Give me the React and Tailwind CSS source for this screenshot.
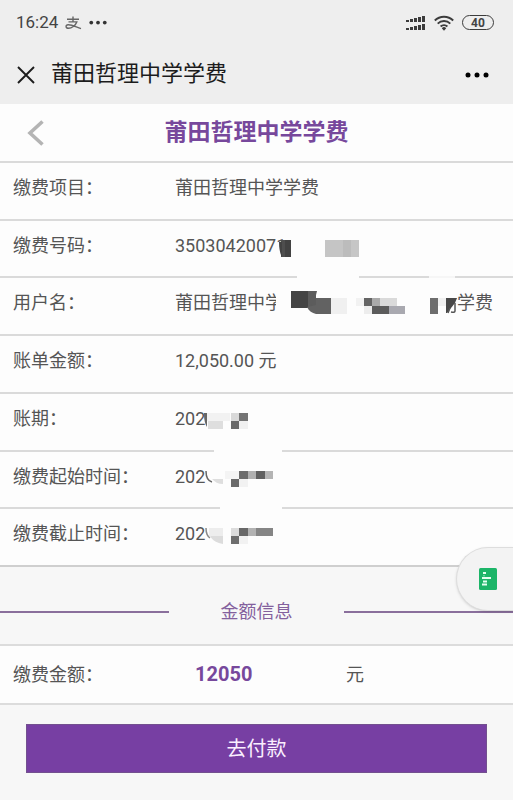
const bill = [
  { label: "缴费项目：", value: "莆田哲理中学学费" },
  { label: "缴费号码：", value: "35030420071", mask: "number" },
  { label: "用户名：", value: "莆田哲理中学", mask: "name", tail: "学费" },
  { label: "账单金额：", value: "12,050.00 元" },
  { label: "账期：", value: "202", mask: "period" },
  { label: "缴费起始时间：", value: "202", mask: "start" },
  { label: "缴费截止时间：", value: "202", mask: "end" },
];

// [x, y, width, height, colour], measured from the value's left edge and the row's top
const masks = {
  number: [
    [110, 16, 75, 22, "#fdfdfd"],
    [106, 19, 5, 17, "#4e4e4e"],
    [110, 19, 6, 17, "#424242"],
    [150, 19, 18, 17, "#c5c5c5"],
    [168, 19, 8, 17, "#bcbcbc"],
    [176, 19, 8, 17, "#c6c6c6"],
    [122, 55, 62, 3, "#fdfdfd"],
    [254, 55, 26, 2, "#f6f6f6"],
  ],
  name: [
    [101, 7, 180, 36, "#fdfdfd"],
    [116, 13, 17, 17, "#444444"],
    [133, 13, 8, 17, "#5c5c5c"],
    [141, 20, 15, 16, "#626262"],
    [156, 20, 16, 16, "#f0f0f0"],
    [181, 20, 8, 8, "#f2f2f2"],
    [189, 20, 8, 8, "#646464"],
    [197, 20, 8, 8, "#aaaaaa"],
    [205, 20, 17, 8, "#dadada"],
    [189, 28, 8, 8, "#ededed"],
    [197, 28, 17, 8, "#5c5c5c"],
    [214, 28, 16, 8, "#a9a9b0"],
    [255, 20, 8, 16, "#6e6e6e"],
    [263, 20, 8, 8, "#f0f0f0"],
  ],
  period: [
    [31, 14, 60, 26, "#fdfdfd"],
    [32, 19, 23, 8, "#f2f2f2"],
    [33, 27, 15, 8, "#dedede"],
    [56, 19, 8, 8, "#d9d9d9"],
    [64, 19, 9, 8, "#747474"],
    [56, 27, 8, 8, "#6a6a6a"],
    [64, 27, 9, 8, "#f0f0f0"],
    [39, 55, 68, 3, "#fdfdfd"],
  ],
  start: [
    [31, 14, 74, 26, "#fdfdfd"],
    [50, 19, 14, 8, "#f4f4f4"],
    [64, 19, 9, 8, "#6c6c6c"],
    [73, 19, 8, 8, "#b0b0b0"],
    [81, 19, 9, 8, "#606060"],
    [90, 19, 8, 8, "#b4b4b4"],
    [56, 27, 8, 8, "#6a6a6a"],
    [64, 27, 9, 8, "#f2f2f2"],
    [45, 55, 62, 3, "#fdfdfd"],
  ],
  end: [
    [31, 14, 74, 26, "#fdfdfd"],
    [34, 19, 14, 8, "#ededed"],
    [56, 19, 8, 8, "#dcdcdc"],
    [64, 19, 9, 8, "#686868"],
    [73, 19, 8, 8, "#b2b2b2"],
    [81, 19, 17, 8, "#858585"],
    [56, 27, 8, 8, "#6e6e6e"],
    [64, 27, 9, 8, "#f2f2f2"],
  ],
};

const maskShapes = {
  number: <path d="M104 21h3v15c-2-3-3-9-3-15z" fill="#424242" />,
  name: (
    <>
      <path d="M141 13h1l-2 8h1v9l-8-5z" fill="#5c5c5c" />
      <path d="M132 29l9-2v9c-4-1-7-3-9-7z" fill="#626262" />
      <path d="M271 20h11l-2 5-8 10h-1z" fill="#484848" />
      <path d="M275 30l-2 5M280 25v8q0 2-4 1" fill="none" stroke="#555" strokeWidth="1.5" />
    </>
  ),
  period: <path d="M29 19h3v14c-2-3-3-7-3-14z" fill="#666" />,
  start: (
    <>
      <path d="M31 19c0 6 2 10 6 11" fill="none" stroke="#666" strokeWidth="1.5" />
      <path d="M37 27h11v5c-5 0-8-2-11-5z" fill="#dedede" />
    </>
  ),
  end: (
    <>
      <path d="M31 19c0 5 1 8 4 10" fill="none" stroke="#888" strokeWidth="1.5" />
      <path d="M35 27h13v8c-6-1-10-3-13-8z" fill="#dcdcdc" />
    </>
  ),
};

const Mask = ({ name }) => (
  <svg
    className="absolute left-0 top-0 z-10 overflow-visible pointer-events-none"
    width="320"
    height="58"
    shapeRendering="crispEdges"
    aria-hidden="true"
  >
    {masks[name].map(([x, y, w, h, fill], i) => (
      <rect key={i} x={x} y={y} width={w} height={h} fill={fill} />
    ))}
    <g shapeRendering="auto">{maskShapes[name]}</g>
  </svg>
);

const AlipayIcon = () => (
  <svg width="17" height="14" viewBox="0 0 17 14" fill="none" stroke="#666" strokeWidth="1.4">
    <path d="M2 3.2h12M8 .5v5.2M3.5 5.9h8.3C10.500 9.500 6.500 12.300 3.600 12.300c-3.200 0-3.400-3.400-.4-3.600C7 8.500 11 11 16 12.600" />
  </svg>
);

const SignalIcon = () => (
  <svg width="20" height="16" viewBox="0 0 20 16" fill="#3c3c3c">
    {[0, 8].map((y) => (
      <g key={y}>
        <rect x="0" y={y + 5} width="3" height="2" />
        <rect x="4" y={y + 4} width="3" height="3" />
        <rect x="8" y={y + 3} width="3" height="4" />
        <rect x="12" y={y + 2} width="3" height="5" />
        <rect x="16" y={y + 1} width="3" height="6" />
      </g>
    ))}
  </svg>
);

const WifiIcon = () => (
  <svg width="20" height="16" viewBox="0 0 20 16" fill="none" stroke="#3c3c3c" strokeWidth="1.9">
    <path d="M.8 5.500a13 13 0 0 1 18.400 0M3.700 8.600a9 9 0 0 1 12.600 0M6.600 11.500a5 5 0 0 1 6.800 0" />
    <path d="M7.800 13.200a3 3 0 0 1 4.400 0L10 15.800z" fill="#3c3c3c" stroke="none" />
  </svg>
);

const CloseIcon = () => (
  <svg width="20" height="20" viewBox="0 0 20 20" fill="none" stroke="currentColor" strokeWidth="1.9">
    <path d="M2 2l16 16M18 2L2 18" />
  </svg>
);

const BackIcon = () => (
  <svg width="18" height="26" viewBox="0 0 18 26" fill="none" stroke="currentColor" strokeWidth="3.6">
    <path d="M15.500 1.500L3 13l12.500 11.500" />
  </svg>
);

const Dots = ({ className }) => (
  <svg className={className} viewBox="0 0 24 6" fill="currentColor">
    <circle cx="3" cy="3" r="2.500" />
    <circle cx="12" cy="3" r="2.500" />
    <circle cx="21" cy="3" r="2.500" />
  </svg>
);

const StatusBar = () => (
  <div className="flex items-center justify-between h-[45px] pl-4 pr-[19px]">
    <div className="flex items-center gap-[7px] text-[17px] text-[#444]">
      <span>16:24</span>
      <AlipayIcon />
      <Dots className="w-[18px] h-[5px] text-[#333]" />
    </div>
    <div className="flex items-center gap-2">
      <SignalIcon />
      <WifiIcon />
      <span className="flex items-center justify-center w-8 h-[15px] rounded-full border border-[#3c3c3c] text-xs leading-none font-bold text-[#444]">
        40
      </span>
    </div>
  </div>
);

const BillRow = ({ label, value, mask, tail }) => (
  <div className="flex border-b-2 last:border-[#cfcfcf] border-[#dadada] bg-[#fdfdfd] pl-[13px] leading-[49px]">
    <dt className="w-[162px] shrink-0">{label}</dt>
    <dd className="relative flex flex-1 justify-between pr-5">
      <span>{value}</span>
      {mask && <Mask name={mask} />}
      {tail && <span>{tail}</span>}
    </dd>
  </div>
);

const App = () => {
  return (
    <div
      lang="zh-CN"
      className="min-h-screen bg-[#f7f7f7] font-['Roboto','Noto_Sans_CJK_SC',sans-serif] text-lg text-[#555]"
    >
      <header className="bg-[#eeeeee] text-[#1c1c1c]">
        <StatusBar />
        <div className="flex items-center h-[59px] pl-4 pr-6">
          <button aria-label="关闭">
            <CloseIcon />
          </button>
          <h1 className="flex-1 pl-[15px] text-[22px]">莆田哲理中学学费</h1>
          <button aria-label="更多">
            <Dots className="w-6 h-[6px] text-black" />
          </button>
        </div>
      </header>

      <main>
        <div className="relative flex items-center justify-center h-[59px] border-b-2 border-[#dadada] bg-[#fdfdfd]">
          <button aria-label="返回" className="absolute left-[27px] text-[#b4b4b4]">
            <BackIcon />
          </button>
          <h2 className="text-[23px] font-bold text-[#77489c]">莆田哲理中学学费</h2>
        </div>

        <dl className="grid grid-rows-7 h-[404px]">
          {bill.map((row) => (
            <BillRow key={row.label} {...row} />
          ))}
        </dl>

        <section>
          <div className="relative flex items-center justify-between h-[79px] border-b-2 border-[#dcdcdc]">
            <span className="w-[33%] h-[2px] mt-3 bg-[#8a6f9c]" />
            <h3 className="mt-3 text-[#83609d]">金额信息</h3>
            <span className="w-[33%] h-[2px] mt-3 bg-[#8a6f9c]" />

            {/* Floating shortcut, sits over the list and the divider */}
            <button
              aria-label="账单"
              className="absolute right-0 -top-5 z-20 flex items-center w-[57px] h-16 pl-[22px] rounded-l-full border border-r-0 border-[#dddddd] bg-[#f3f3f3] shadow-sm"
            >
              <svg width="18" height="22" viewBox="0 0 18 22">
                <rect width="18" height="22" rx="1.500" fill="#1cb568" />
                <path d="M4 5h3M3 10h9M4 13.500h4M3 16.500h5" stroke="#e4fff0" strokeWidth="1.800" />
                <path d="M4 7.800h2" stroke="#7fdcaa" />
              </svg>
            </button>
          </div>

          <div className="flex h-[59px] border-b-2 border-[#dcdcdc] bg-[#fdfdfd] pl-[13px] leading-[57px]">
            <span className="w-[182px]">缴费金额：</span>
            <span className="w-[151px] text-xl leading-[57px] font-bold text-[#77489c]">12050</span>
            <span>元</span>
          </div>
        </section>

        <div className="px-[26px] py-[19px]">
          <button className="w-full h-[49px] bg-[#773fa3] border border-[#73508f] text-xl text-[#fbefff]">
            去付款
          </button>
        </div>
      </main>
    </div>
  );
};

export default App;
